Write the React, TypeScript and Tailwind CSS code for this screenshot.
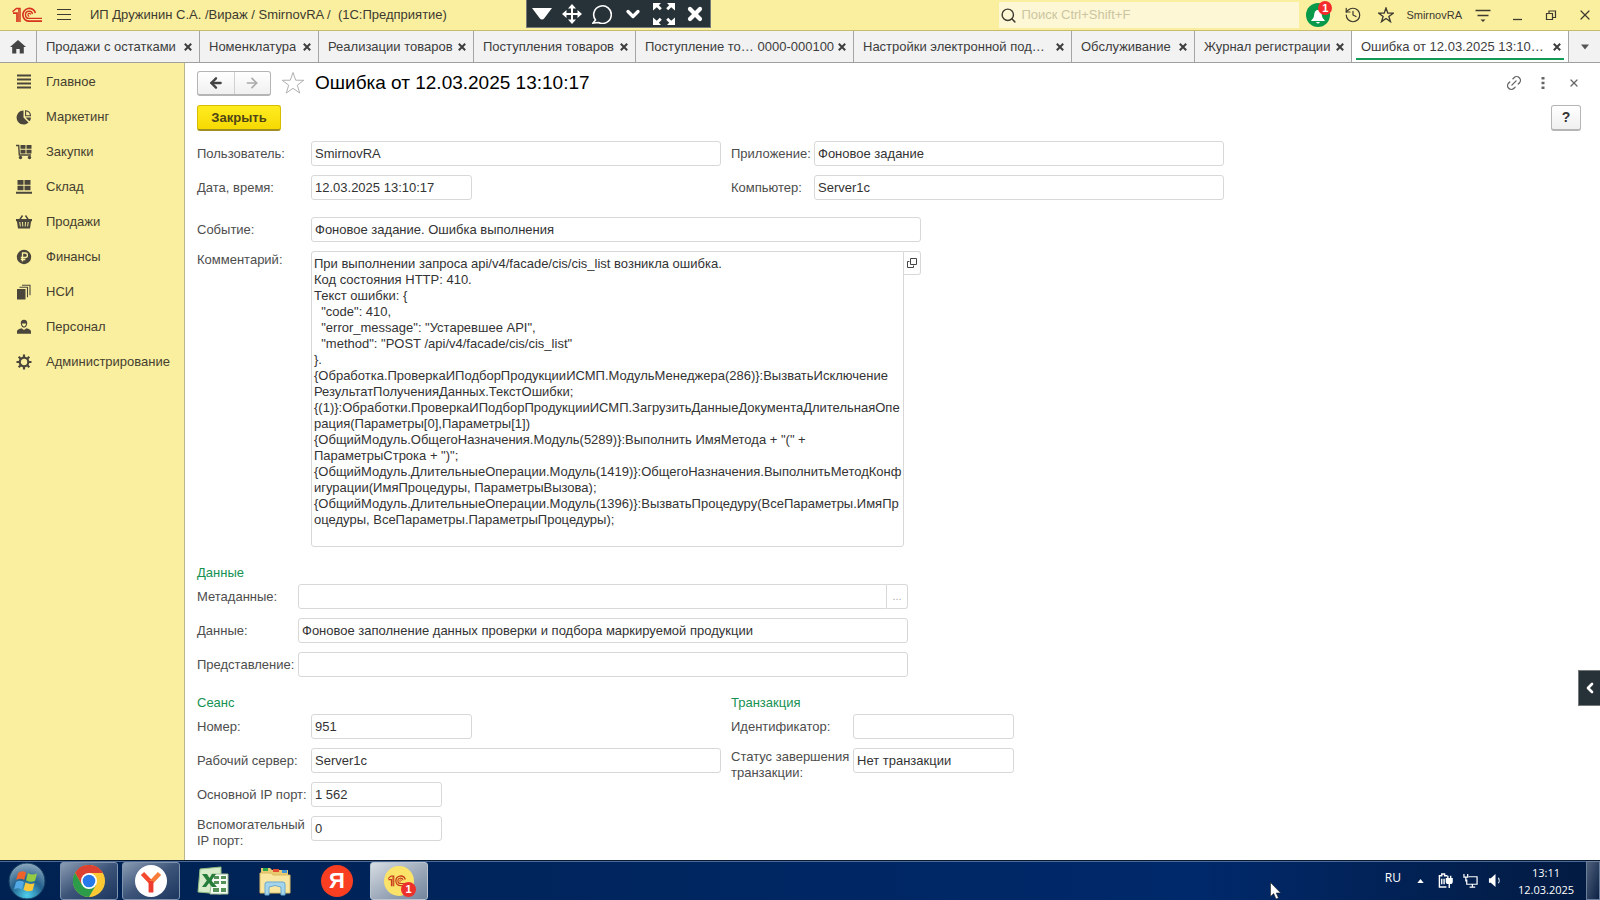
import React from "react";
import {
  ArrowLeft,
  ArrowRight,
  ChevronDown,
  ChevronLeft,
  History,
  Link2,
  Search,
  X,
} from "lucide-react";

const comment = `При выполнении запроса api/v4/facade/cis/cis_list возникла ошибка.
Код состояния HTTP: 410.
Текст ошибки: {
  "code": 410,
  "error_message": "Устаревшее API",
  "method": "POST /api/v4/facade/cis/cis_list"
}.
{Обработка.ПроверкаИПодборПродукцииИСМП.МодульМенеджера(286)}:ВызватьИсключение
РезультатПолученияДанных.ТекстОшибки;
{(1)}:Обработки.ПроверкаИПодборПродукцииИСМП.ЗагрузитьДанныеДокументаДлительнаяОпе
рация(Параметры[0],Параметры[1])
{ОбщийМодуль.ОбщегоНазначения.Модуль(5289)}:Выполнить ИмяМетода + "(" +
ПараметрыСтрока + ")";
{ОбщийМодуль.ДлительныеОперации.Модуль(1419)}:ОбщегоНазначения.ВыполнитьМетодКонф
игурации(ИмяПроцедуры, ПараметрыВызова);
{ОбщийМодуль.ДлительныеОперации.Модуль(1396)}:ВызватьПроцедуру(ВсеПараметры.ИмяПр
оцедуры, ВсеПараметры.ПараметрыПроцедуры);`;

function Logo1C({ className }: { className: string }) {
  return (
    <svg viewBox="0 0 30 16" className={className} fill="none" stroke="currentColor" aria-hidden="true">
      <path d="M.5 4.8 4.4 1.5H8V15" strokeWidth="1.5" />
      <path d="M1 6.2h4V15" strokeWidth="1.7" />
      <path d="M6.5 2v13" strokeWidth=".8" />
      <path d="M23.4 6A6.4 6.4 0 1 0 17.2 14.2H30" strokeWidth="1.7" />
      <path d="M20.6 7A3.6 3.6 0 1 0 17.2 11.4H30" strokeWidth="1.4" />
      <path d="M18.7 7.6a1.4 1.4 0 1 0-1.4 1.6" strokeWidth="1.1" />
    </svg>
  );
}

function StarIcon({ className }: { className: string }) {
  return (
    <svg viewBox="0 0 24 24" className={className} fill="none" stroke="currentColor" aria-hidden="true">
      <path d="m12 1.5 2.7 7.7 8.1.1-6.5 4.9 2.4 7.8-6.7-4.7L5.3 22l2.4-7.8L1.200 9.300l8.1-.1z" />
    </svg>
  );
}

const sideItems: { label: string; icon: React.ReactNode }[] = [
  { label: "Главное", icon: <path d="M1 1.500h14M1 5.500h14M1 9.500h14M1 13.500h14" stroke="currentColor" strokeWidth="2" /> },
  {
    label: "Маркетинг",
    icon: (
      <>
        <path d="M7.500 1.500v7l5 5A7 7 0 1 1 7.500 1.500z" />
        <path d="M9.600 1.700v5h4.900a5.300 5.300 0 0 0-4.900-5z" fill="none" stroke="currentColor" strokeWidth="1.100" />
        <path d="M9.500 8.500H15a6 6 0 0 1-1.600 3.800z" />
      </>
    ),
  },
  {
    label: "Закупки",
    icon: (
      <>
        <path d="M0 1.500h2.700l.6 9.500H15" fill="none" stroke="currentColor" strokeWidth="1.400" />
        <path d="M4.500 1h5v3.700h-5zM10.500 1h5v3.700h-5zM4.500 5.700h5v3.700h-5zM10.500 5.700h5v3.700h-5z" />
        <circle cx="4.500" cy="13.500" r="1.700" />
        <circle cx="13.500" cy="13.500" r="1.700" />
      </>
    ),
  },
  { label: "Склад", icon: <path d="M1.500 1h6v4.800h-6zM8.500 1h6v4.800h-6zM1.500 6.800h6v4.400h-6zM8.500 6.800h6v4.400h-6zM0 12.800h16v2H0z" /> },
  {
    label: "Продажи",
    icon: (
      <>
        <path d="m3.500 6 3-4.500M12.500 6l-3-4.500" stroke="currentColor" strokeWidth="1.400" />
        <path fillRule="evenodd" d="M0 5h16v2.200h-.9L14 14.500H2L.9 7.200H0zM3.300 8l.6 4.500h.9L4.300 8zm2.700 0 .4 4.500h.9L7 8zm3 0-.3 4.500h.9L10 8zm2.700 0-.5 4.500h.9l.6-4.500z" />
      </>
    ),
  },
  {
    label: "Финансы",
    icon: (
      <>
        <circle cx="8" cy="8" r="7.200" />
        <path d="M6.500 12.500V4h2.700a2.200 2.200 0 0 1 0 4.500H4.800M4.800 10.500h4.500" fill="none" stroke="#faef9f" strokeWidth="1.300" />
      </>
    ),
  },
  {
    label: "НСИ",
    icon: (
      <>
        <path d="M1 5h8.500v10.500H1z" />
        <path d="M3.500 3.300h8v10M6 1.300h8v10" fill="none" stroke="currentColor" strokeWidth="1.100" />
      </>
    ),
  },
  {
    label: "Персонал",
    icon: (
      <>
        <path d="M8 .8c2.300 0 3.400 1.600 3.200 3.700C11 6.700 9.800 8.700 8 8.700S5 6.700 4.800 4.500C4.600 2.400 5.700.8 8 .8z" />
        <path d="M6 4.500h4C10 6 9.200 7.500 8 7.500S6 6 6 4.500z" fill="#faef9f" />
        <path d="M1 14.800v-2C1 10.500 3.500 10 5.500 9.300L8 11l2.500-1.700c2 .7 4.500 1.200 4.500 3.500v2z" />
      </>
    ),
  },
  {
    label: "Администрирование",
    icon: (
      <>
        <circle cx="8" cy="8" r="4.300" fill="none" stroke="currentColor" strokeWidth="2.200" />
        <path d="M8 .5v3M8 12.500v3M.5 8h3M12.500 8h3M2.700 2.700l2 2M11.300 11.300l2 2M2.700 13.300l2-2M11.300 4.700l2-2" stroke="currentColor" strokeWidth="2.200" />
      </>
    ),
  },
];

const tabs = [
  { label: "Продажи с остатками", width: "w-[163px]" },
  { label: "Номенклатура", width: "w-[119px]" },
  { label: "Реализации товаров", width: "w-[155px]" },
  { label: "Поступления товаров", width: "w-[162px]" },
  { label: "Поступление то… 0000-000100", width: "w-[218px]" },
  { label: "Настройки электронной под…", width: "w-[218px]" },
  { label: "Обслуживание", width: "w-[123px]" },
  { label: "Журнал регистрации", width: "w-[157px]" },
  { label: "Ошибка от 12.03.2025 13:10…", width: "w-[217px]", active: true },
];

function TitleBar() {
  return (
    <header className="flex h-[31px] items-center border-b border-[#c9bb6c] bg-[#faef9f] text-[#3d3a30]">
      <Logo1C className="ml-3 h-4 w-[30px] shrink-0 text-[#d6341f]" />
      <button aria-label="Меню" className="ml-3 flex h-6 w-5 shrink-0 items-center justify-center">
        <svg viewBox="0 0 16 12" className="h-3 w-4" stroke="currentColor">
          <path d="M1 .5h14M1 5.500h14M1 10.500h14" />
        </svg>
      </button>
      <h1 className="ml-4 w-[436px] shrink-0 whitespace-pre text-[13px]">{"ИП Дружинин С.А. /Вираж / SmirnovRA /  (1С:Предприятие)"}</h1>
      <div className="flex h-7 w-[185px] shrink-0 items-center justify-around self-start border border-t-0 border-[#75797a] bg-[#263238] text-white">
        <button aria-label="Свернуть панель"><svg viewBox="0 0 20 12" className="h-3 w-5" fill="currentColor"><path d="M0 0h20l-7.500 10q-2.500 3-5 0z" /></svg></button>
        <button aria-label="Переместить">
          <svg viewBox="0 0 20 20" className="size-5" fill="currentColor"><path d="m10 0 4 4.500h-3V9h4.500V6l4.500 4-4.500 4v-3H11v4.500h3L10 20l-4-4.500h3V11H4.500v3L0 10l4.500-4v3H9V4.500H6z" /></svg>
        </button>
        <button aria-label="Чат">
          <svg viewBox="0 0 20 20" className="size-5" fill="none" stroke="currentColor" strokeWidth="1.600"><path d="M3.500 16A8.800 8.800 0 1 1 6.500 18.500L1 19z" /></svg>
        </button>
        <button aria-label="Развернуть"><ChevronDown className="size-5" strokeWidth={4} /></button>
        <button aria-label="На весь экран">
          <svg viewBox="0 0 22 22" className="size-[22px]" fill="currentColor">
            <path d="M0 0h8L5.800 2.200l3 3-2 2-3-3L0 7.500zM22 0v7.500l-3.800-3.300-3 3-2-2 3-3L14 0zM0 22v-7.500l3.800 3.300 3-3 2 2-3 3L8 22zM22 22h-8l2.200-2.200-3-3 2-2 3 3 3.800-3.300z" />
          </svg>
        </button>
        <button aria-label="Закрыть панель"><X className="size-5" strokeWidth={5} /></button>
      </div>
      <div className="flex min-w-0 flex-1 items-center justify-end">
        <label className="flex h-[26px] w-[300px] min-w-0 items-center bg-[#fdf7d6] pl-px">
          <Search className="size-[17px] shrink-0" strokeWidth={2} />
          <input aria-label="Поиск" placeholder="Поиск Ctrl+Shift+F" className="ml-1 min-w-0 flex-1 bg-transparent text-[13px] outline-none placeholder:text-[#cbc5a0]" />
        </label>
        <button aria-label="Уведомления" className="relative ml-[7px] flex size-6 shrink-0 items-center justify-center rounded-full bg-[#079a4b] text-white">
          <svg viewBox="0 0 16 16" className="mt-1 size-4" fill="currentColor"><path d="M8 1c3 0 3.500 2.500 4 6 .3 2 2 3.500 3 5H1c1-1.500 2.700-3 3-5 .5-3.500 1-6 4-6zM6 13h4q-2 3-4 0z" /></svg>
          <span className="absolute -right-[2px] -top-[2px] flex size-[14px] items-center justify-center rounded-full bg-[#f52b2b] text-[11px] font-bold leading-none">1</span>
        </button>
        <button aria-label="История" className="ml-[14px] shrink-0"><History className="size-[18px]" strokeWidth={1.6} /></button>
        <button aria-label="Избранное" className="ml-4 shrink-0"><StarIcon className="size-4 stroke-2" /></button>
        <button className="ml-3 shrink-0 text-[11px]">SmirnovRA</button>
        <button aria-label="Настройки" className="ml-[13px] shrink-0">
          <svg viewBox="0 0 16 16" className="size-4" fill="none" stroke="currentColor"><path d="M.5 3.500h15M2.500 8.500h11" strokeWidth="1.300" /><path d="M5.500 12.500h5L8 15z" fill="currentColor" stroke="none" /></svg>
        </button>
        <button aria-label="Свернуть" className="ml-[18px] shrink-0"><svg viewBox="0 0 16 16" className="size-4" stroke="currentColor"><path d="M4 12.500h9" strokeWidth="1.300" /></svg></button>
        <button aria-label="Восстановить" className="ml-[18px] shrink-0"><svg viewBox="0 0 16 16" className="size-4" fill="none" stroke="currentColor" strokeWidth="1.200"><path d="M3.500 6.500h6v6h-6zM6 6.500v-2.500h6.500v6.500H9.500" /></svg></button>
        <button aria-label="Закрыть окно" className="ml-[18px] mr-[7px] shrink-0"><X className="size-4" strokeWidth={1.8} /></button>
      </div>
    </header>
  );
}

function TabBar() {
  return (
    <nav className="flex h-8 border-b border-[#9fa19f] bg-[#f2f2f2] text-[13px] text-[#3d3d3d]">
      <button aria-label="Начальная страница" className="flex w-[37px] shrink-0 items-center justify-center border-r border-[#a5a5a5]">
        <svg viewBox="0 0 16 14" className="h-[14px] w-4" fill="#444"><path d="m8 0 8 7h-2.200v6.500H9.700V9H6.300v4.500H2.200V7H0z" /></svg>
      </button>
      {tabs.map((t) => (
        <div
          key={t.label}
          className={`flex min-w-0 flex-col border-r border-[#a5a5a5] px-1 ${t.width} ${t.active ? "bg-white" : ""}`}
        >
          <div className={`flex flex-1 items-center justify-between pl-[5px] pr-[3px] ${t.active ? "pt-1" : ""}`}>
            <button className="truncate">{t.label}</button>
            <button aria-label="Закрыть вкладку" className="shrink-0">
              <svg viewBox="0 0 8 8" className="size-2" stroke="currentColor" strokeWidth="2"><path d="m.8.8 6.400 6.400M7.200.8.8 7.200" /></svg>
            </button>
          </div>
          {t.active && <div className="mb-[2px] h-[2px] bg-[#109a54]" />}
        </div>
      ))}
      <button aria-label="Список вкладок" className="flex flex-1 items-center justify-center">
        <svg viewBox="0 0 10 6" className="h-[6px] w-2" fill="#555"><path d="M0 0h10L5 6z" /></svg>
      </button>
    </nav>
  );
}

function Sidebar() {
  return (
    <aside className="w-[185px] shrink-0 border-r border-[#b9b58c] bg-[#faef9f]">
      <ul className="pt-px">
        {sideItems.map((s) => (
          <li key={s.label}>
            <a href="#" className="flex h-[35px] items-center gap-[14px] pl-4 text-[13px] text-[#45402f]">
              <svg viewBox="0 0 16 16" className="size-4 shrink-0 text-[#4a463c]" fill="currentColor" aria-hidden="true">{s.icon}</svg>
              {s.label}
            </a>
          </li>
        ))}
      </ul>
    </aside>
  );
}

type FieldProps = { id: string; label: string; value?: string; labelWidth: string; width: string; twoLine?: boolean };

function Field({ id, label, value = "", labelWidth, width, twoLine }: FieldProps) {
  return (
    <div className="flex h-[25px] items-start">
      <label htmlFor={id} className={`shrink-0 text-[#4d4d4d] ${twoLine ? "pt-px leading-4" : "whitespace-nowrap leading-[25px]"} ${labelWidth}`}>
        {label}
      </label>
      <input id={id} readOnly value={value} className={`h-[25px] min-w-0 rounded-[3px] border border-[#d8d8d8] bg-white px-[3px] text-[#333] outline-none ${width}`} />
    </div>
  );
}

function ErrorForm() {
  return (
    <main className="min-w-0 flex-1 bg-white pb-[18px] pl-3 text-[13px]">
      <div className="mb-[2px] flex h-10 items-center pr-5">
        <div className="flex h-[25px] w-[74px] overflow-hidden rounded-[3px] border border-b-2 border-[#b5b5b5] bg-gradient-to-b from-white to-[#f0f0f0]">
          <button aria-label="Назад" className="flex flex-1 items-center justify-center border-r border-[#d0d0d0]"><ArrowLeft className="size-4 text-[#444]" strokeWidth={3.5} /></button>
          <button aria-label="Вперёд" className="flex flex-1 items-center justify-center"><ArrowRight className="size-4 text-[#ababab]" strokeWidth={2.5} /></button>
        </div>
        <button aria-label="В избранное" className="ml-[10px]"><StarIcon className="size-6 text-[#b0b0b0]" /></button>
        <h2 className="ml-[10px] text-[19px] text-black">Ошибка от 12.03.2025 13:10:17</h2>
        <div className="ml-auto flex items-center text-[#666]">
          <button aria-label="Ссылка"><Link2 className="size-[18px] -rotate-45" strokeWidth={1.8} /></button>
          <button aria-label="Ещё" className="ml-3 flex w-4 justify-center"><svg viewBox="0 0 4 14" className="h-[14px] w-1" fill="currentColor"><path d="M.500 1h3v2.500h-3zM.500 5.700h3v2.500h-3zM.500 10.500h3V13h-3z" /></svg></button>
          <button aria-label="Закрыть форму" className="ml-[17px]"><X className="size-3" strokeWidth={2.5} /></button>
        </div>
      </div>
      <div className="flex justify-between pr-[19px]">
        <button className="h-[26px] w-[84px] rounded-[3px] border border-b-2 border-[#d6bd00] border-b-[#a08f20] bg-gradient-to-b from-[#ffec1f] to-[#f7d900] text-[13px] font-bold leading-[23px] text-[#504516]">Закрыть</button>
        <button className="h-[26px] w-[30px] rounded-[3px] border border-b-2 border-[#b5b5b5] bg-gradient-to-b from-white to-[#f0f0f0] text-[14px] font-bold leading-[23px] text-[#333]">?</button>
      </div>

      <div className="mt-[10px] flex gap-[10px]">
        <div className="flex flex-col gap-[9px]">
          <Field id="user" label="Пользователь:" value="SmirnovRA" labelWidth="w-[114px]" width="w-[410px]" />
          <Field id="date" label="Дата, время:" value="12.03.2025 13:10:17" labelWidth="w-[114px]" width="w-[161px]" />
        </div>
        <div className="flex flex-col gap-[9px]">
          <Field id="app" label="Приложение:" value="Фоновое задание" labelWidth="w-[83px]" width="w-[410px]" />
          <Field id="host" label="Компьютер:" value="Server1c" labelWidth="w-[83px]" width="w-[410px]" />
        </div>
      </div>

      <div className="mt-[17px] flex flex-col gap-[9px]">
        <Field id="event" label="Событие:" value="Фоновое задание. Ошибка выполнения" labelWidth="w-[114px]" width="w-[610px]" />
        <div className="flex items-start">
          <label htmlFor="comment" className="w-[114px] shrink-0 pt-px leading-4 text-[#4d4d4d]">Комментарий:</label>
          <textarea id="comment" readOnly wrap="off" value={comment} className="block h-[296px] w-[593px] resize-none overflow-hidden rounded-[3px] rounded-tr-none border border-[#d8d8d8] px-[2px] py-1 leading-4 text-[#333] outline-none" />
          <button aria-label="Открыть текст" className="flex h-6 w-[17px] items-center justify-center rounded-r-[3px] border border-l-0 border-[#d8d8d8]">
            <svg viewBox="0 0 10 10" className="size-[10px]" fill="none" stroke="#444"><path d="M3.500.5h6v6h-6zM2.500 3.500h-2v6h6v-2" /></svg>
          </button>
        </div>
      </div>

      <section>
        <h3 className="mt-[18px] leading-4 text-[#159152]">Данные</h3>
        <div className="mt-[3px] flex flex-col gap-[9px]">
          <div className="flex h-[25px] items-start">
            <label htmlFor="meta" className="w-[101px] shrink-0 leading-[25px] text-[#4d4d4d]">Метаданные:</label>
            <input id="meta" readOnly value="" className="h-[25px] w-[589px] min-w-0 rounded-l-[3px] border border-[#d8d8d8] px-[3px] outline-none" />
            <button aria-label="Выбрать" className="h-[25px] w-[21px] rounded-r-[3px] border border-l-0 border-[#d8d8d8] text-[11px] text-[#aaa]">...</button>
          </div>
          <Field id="data" label="Данные:" value="Фоновое заполнение данных проверки и подбора маркируемой продукции" labelWidth="w-[101px]" width="w-[610px]" />
          <Field id="view" label="Представление:" labelWidth="w-[101px]" width="w-[610px]" />
        </div>
      </section>

      <div className="mt-[18px] flex gap-[10px]">
        <section className="w-[524px]">
          <h3 className="leading-4 text-[#159152]">Сеанс</h3>
          <div className="mt-[3px] flex flex-col gap-[9px]">
            <Field id="number" label="Номер:" value="951" labelWidth="w-[114px]" width="w-[161px]" />
            <Field id="server" label="Рабочий сервер:" value="Server1c" labelWidth="w-[114px]" width="w-[410px]" />
            <Field id="port" label="Основной IP порт:" value="1 562" labelWidth="w-[114px]" width="w-[131px]" />
            <Field id="auxport" label="Вспомогательный IP порт:" value="0" labelWidth="w-[114px]" width="w-[131px]" twoLine />
          </div>
        </section>
        <section>
          <h3 className="leading-4 text-[#159152]">Транзакция</h3>
          <div className="mt-[3px] flex flex-col gap-[9px]">
            <Field id="txid" label="Идентификатор:" labelWidth="w-[122px]" width="w-[161px]" />
            <Field id="txstatus" label="Статус завершения транзакции:" value="Нет транзакции" labelWidth="w-[122px]" width="w-[161px]" twoLine />
          </div>
        </section>
      </div>
    </main>
  );
}

const litButton = "border-[#7f93ad] bg-gradient-to-br from-[#8c9db4] via-[#3c5478] to-[#1c365f]";

function TaskButton({ label, look, children }: { label: string; look: string; children: React.ReactNode }) {
  return (
    <button aria-label={label} className={`flex h-[38px] w-[58px] items-center justify-center rounded-[3px] border ${look}`}>
      {children}
    </button>
  );
}

function Taskbar() {
  return (
    <footer className="flex h-10 items-center border-t border-[#0a1a33] bg-gradient-to-r from-[#002252] via-[#00296b] via-75% to-[#021a40] text-white shadow-[inset_0_1px_0_#4b6a95]">
      <button aria-label="Пуск" className="ml-2 flex size-[38px] shrink-0 items-center justify-center">
        <svg viewBox="0 0 38 38" className="size-[38px]">
          <defs>
            <radialGradient id="orb" cx="50%" cy="90%" r="90%">
              <stop offset="0" stopColor="#4fd0ee" />
              <stop offset=".5" stopColor="#23618e" />
              <stop offset="1" stopColor="#90aabd" />
            </radialGradient>
          </defs>
          <circle cx="19" cy="19" r="18" fill="url(#orb)" stroke="#143d60" />
          <path d="M10 11q4-3 8-.5l-1.800 7.500q-4-2.500-8 0z" fill="#ef632b" />
          <path d="M20 11q4 2.800 9 .5L27 19q-4.500 2-9-.8z" fill="#94cb43" />
          <path d="M8 20q4-2.600 8 0L14 27.500q-4-2.500-8 0z" fill="#52a9e6" />
          <path d="M17.500 20.500q4.500 2.500 9 .7L24.500 28.500q-4.500 2-9-.8z" fill="#fbc83a" />
        </svg>
      </button>
      <div className="ml-[14px] flex items-center gap-1">
        <TaskButton label="Chrome" look={litButton}>
          <svg viewBox="0 0 32 32" className="size-8">
            <circle cx="16" cy="16" r="16" fill="#fcc934" />
            <path d="M2.100 8A16 16 0 0 1 29.900 8H16L9.100 20z" fill="#dc4030" />
            <path d="M2.100 8A16 16 0 0 0 16 32l6.900-12H9.100z" fill="#2c9c4b" />
            <circle cx="16" cy="16" r="8" fill="#fff" />
            <circle cx="16" cy="16" r="6.300" fill="#2779e9" />
          </svg>
        </TaskButton>
        <TaskButton label="Яндекс Браузер" look={litButton}>
          <svg viewBox="0 0 32 32" className="size-8">
            <circle cx="16" cy="16" r="16" fill="#fff" />
            <path d="m7.500 8.500 8.500 9v9.500" fill="none" stroke="#f44a30" strokeWidth="4.500" />
            <path d="M24.500 8.500 16 17.500" stroke="#f77b39" strokeWidth="4.500" />
            <path d="M16 16v11.500" stroke="#ef3b2d" strokeWidth="4.500" />
          </svg>
        </TaskButton>
        <TaskButton label="Excel" look="border-transparent">
          <svg viewBox="0 0 32 30" className="h-[30px] w-8">
            <path d="M3 3 24 1v27L1 26z" fill="#d8eccb" stroke="#8fbd80" />
            <path d="M15 8h16v20H13z" fill="#f7fbf5" stroke="#9ebf97" />
            <path d="M17 10h5v3h-5zM24 10h5v3h-5zM17 15h5v3h-5zM24 15h5v3h-5zM16 22h6v4h-6zM24 22h5v4h-5z" fill="#55925a" />
            <path d="M5 8h5l2.500 4L15 8h4l-4.500 6.500L20 21h-5l-3-4-3 4H5l4.800-6.500z" fill="#267c3b" />
          </svg>
        </TaskButton>
        <TaskButton label="Проводник" look="border-transparent">
          <svg viewBox="0 0 32 30" className="h-[30px] w-8">
            <path d="M2 5V2h9l2 2h16v23H2z" fill="#e9cb6f" />
            <path d="M4 2h5v3H4z" fill="#2ba64b" /><path d="M14 3h6v3h-6z" fill="#e24d32" /><path d="M23 4h5v3h-5z" fill="#4395d6" />
            <path d="M1 7h11l2 2h17v18H1z" fill="#f9e6a1" stroke="#dbbb65" />
            <path d="M6 29V18q0-2 2-2h16q2 0 2 2v11h-4v-8q-6-3-12 0v8z" fill="#a4d5ed" stroke="#6aaace" />
          </svg>
        </TaskButton>
        <TaskButton label="Яндекс" look="border-transparent">
          <span className="flex size-8 items-center justify-center rounded-full bg-[#f93e21] text-[22px] font-bold leading-none">Я</span>
        </TaskButton>
        <TaskButton label="1С:Предприятие" look="border-[#bac4d0] bg-gradient-to-br from-[#d7dde3] via-[#a1adbd] to-[#73849d]">
          <span className="relative flex size-[30px] items-center justify-center rounded-full bg-[#fbe36a]">
            <Logo1C className="h-3 w-6 text-[#c63b1c]" />
            <span className="absolute -bottom-px -right-[2px] flex size-[15px] items-center justify-center rounded-full bg-[#ee302b] text-[11px] font-bold leading-none">1</span>
          </span>
        </TaskButton>
      </div>
      <div className="ml-auto flex h-full items-center font-['Open_Sans',sans-serif]">
        <span className="mb-[6px] text-[12px]">RU</span>
        <svg viewBox="0 0 8 5" className="ml-4 h-1 w-[7px]" fill="#fff"><path d="M4 0 8 5H0z" /></svg>
        <svg viewBox="0 0 16 16" className="ml-[14px] size-[15px]" fill="none" stroke="#fff" strokeWidth="1.500"><path d="M10 3H7V1H4v2H1.500v12H9M4 6v6M6.500 6v6" /><path d="M9 6h6v3q0 2-2 2h-2q-2 0-2-2zM10.500 6V3M13.500 6V3M12 11v5" fill="#fff" /></svg>
        <svg viewBox="0 0 16 16" className="ml-[10px] size-[15px]" fill="none" stroke="#fff" strokeWidth="1.300"><path d="M6 4h9v8H4V7M7 15h6M10 12v3M1 1v3.500h4V1M3 5v4" /></svg>
        <svg viewBox="0 0 16 16" className="ml-[10px] size-[15px]" fill="none" stroke="#cfd9e6" strokeWidth="1.200"><path d="M1 5.500h2L8 1v14l-5-4.500H1z" fill="#fff" stroke="none" /><path d="M11 5q2 3 0 6" /></svg>
        <div className="ml-[14px] w-[58px] text-center text-[11px] leading-[17px]">
          <div>13:11</div>
          <div className="whitespace-nowrap">12.03.2025</div>
        </div>
        <button aria-label="Показать рабочий стол" className="ml-[11px] h-full w-[14px] border border-[#6c7f9a] bg-gradient-to-br from-[#51617a] to-[#0b2145]" />
      </div>
    </footer>
  );
}

export default function App() {
  return (
    <div className="relative flex min-h-screen flex-col overflow-hidden bg-white font-['Liberation_Sans',Arial,sans-serif]">
      <TitleBar />
      <TabBar />
      <div className="flex flex-1">
        <Sidebar />
        <ErrorForm />
      </div>
      <Taskbar />
      <button aria-label="Показать панель" className="absolute right-0 top-[670px] flex h-9 w-[22px] items-center justify-center border border-r-0 border-[#75797a] bg-[#263238] text-white">
        <ChevronLeft className="size-4" strokeWidth={4} />
      </button>
      <svg viewBox="0 0 12 18" className="pointer-events-none absolute bottom-0 left-[1270px] h-[18px] w-3" fill="#fff" stroke="#222" strokeWidth=".6">
        <path d="M.5.5v14l3.200-3L6 17l2.500-1-2.300-5h4.500z" />
      </svg>
    </div>
  );
}
